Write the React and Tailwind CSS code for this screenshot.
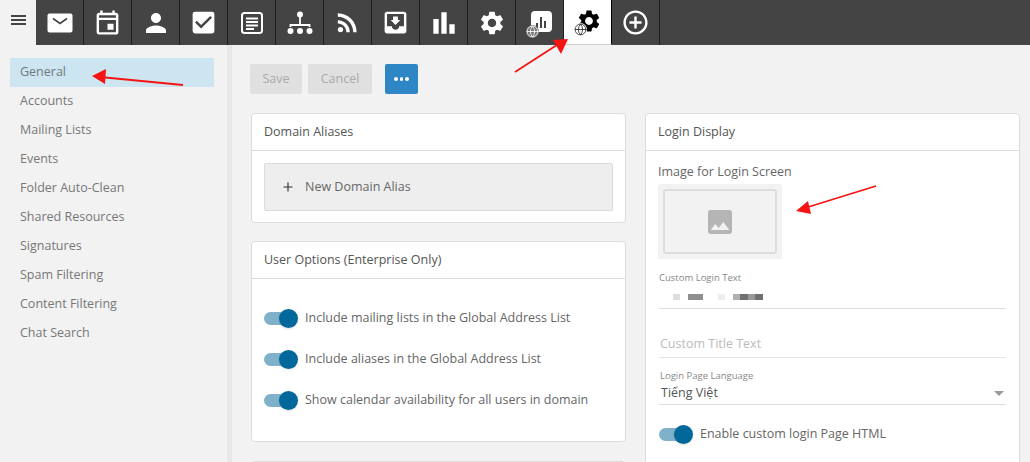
import React from "react";
import {
  MdPerson,
  MdCheckBox,
  MdRssFeed,
  MdMoveToInbox,
  MdBarChart,
  MdSettings,
  MdAddCircleOutline,
  MdOutlineEvent,
  MdImage,
} from "react-icons/md";
import { Globe, Plus } from "lucide-react";

const MailIcon = () => (
  <svg width="26" height="20" viewBox="0 0 26 20">
    <rect x="0.5" y="0.5" width="25" height="19" rx="2" fill="#fff" />
    <path d="M6 5.5 L13 10.5 L20 5.5" fill="none" stroke="#444" strokeWidth="1.6" />
  </svg>
);

const NotesIcon = () => (
  <svg width="24" height="24" viewBox="0 0 24 24">
    <rect x="2" y="2" width="20" height="20" rx="2.5" fill="none" stroke="#fff" strokeWidth="2" />
    <path d="M6 7.5h12M6 11h12M6 14.500h12M6 18h8" stroke="#fff" strokeWidth="2" />
  </svg>
);

const OrgIcon = () => (
  <svg width="26" height="24" viewBox="0 0 26 24">
    <circle cx="13" cy="3.500" r="3" fill="#fff" />
    <circle cx="3.500" cy="20" r="3" fill="#fff" />
    <circle cx="13" cy="20" r="3" fill="#fff" />
    <circle cx="22.500" cy="20" r="3" fill="#fff" />
    <path d="M13 6v9M3.500 16v-2h19v2" fill="none" stroke="#fff" strokeWidth="1.800" />
  </svg>
);

const ChartGlobeIcon = () => (
  <div className="relative w-6 h-6">
    <div className="absolute right-0 top-0 w-[21px] h-[21px] bg-white rounded-sm flex items-end justify-center gap-[2px] pb-1">
      <div className="w-[2px] h-[5px] bg-[#444]"></div>
      <div className="w-[2px] h-[11px] bg-[#444]"></div>
      <div className="w-[2px] h-[7px] bg-[#444]"></div>
    </div>
    <Globe className="absolute -left-[2px] bottom-[-3px] bg-[#777] rounded-full text-white" size={13} strokeWidth={1.500} />
  </div>
);

const AdminIcon = () => (
  <div className="relative w-7 h-7 flex items-center justify-center">
    <MdSettings className="absolute right-0 top-0 text-black" size={26} />
    <Globe className="absolute left-0 bottom-0 bg-white rounded-full text-[#222]" size={13} strokeWidth={1.500} />
  </div>
);

const tabs = [
  { icon: <MailIcon /> },
  { icon: <MdOutlineEvent size={29} /> },
  { icon: <MdPerson size={30} /> },
  { icon: <MdCheckBox size={29} /> },
  { icon: <NotesIcon /> },
  { icon: <OrgIcon /> },
  { icon: <MdRssFeed size={29} /> },
  { icon: <MdMoveToInbox size={29} /> },
  { icon: <MdBarChart size={32} /> },
  { icon: <MdSettings size={28} /> },
  { icon: <ChartGlobeIcon /> },
  { icon: <AdminIcon />, active: true },
  { icon: <MdAddCircleOutline size={29} /> },
];

const menu = [
  "General",
  "Accounts",
  "Mailing Lists",
  "Events",
  "Folder Auto-Clean",
  "Shared Resources",
  "Signatures",
  "Spam Filtering",
  "Content Filtering",
  "Chat Search",
];

const Toggle = () => (
  <div className="relative w-[34px] h-[19px] shrink-0">
    <div className="absolute left-0 top-[3px] w-[30px] h-[13px] rounded-full bg-[#7fb2ca]"></div>
    <div className="absolute right-0 top-0 w-[19px] h-[19px] rounded-full bg-[#02689b] shadow-sm"></div>
  </div>
);

const Card = ({ title, children, className }) => (
  <div className={`bg-white border border-[#dcdcdc] rounded-[4px] ${className}`}>
    <div className="h-[37px] px-3 flex items-center border-b border-[#dcdcdc] text-[12.500px] text-[#555]">
      {title}
    </div>
    {children}
  </div>
);

const ToggleRow = ({ label }) => (
  <div className="flex items-center gap-[7px] h-[19px]">
    <Toggle />
    <span className="text-[12.500px] text-[#666]">{label}</span>
  </div>
);

export default function App() {
  return (
    <div className="relative w-[1030px] h-[462px] overflow-hidden bg-[#f2f2f2] font-['Open_Sans',sans-serif]">
      {/* top bar */}
      <div className="flex h-[45px] bg-[#444]">
        <div className="w-[36px] bg-[#f2f2f2] flex items-center justify-center">
          <div className="flex flex-col gap-[2px] w-[15px] -mt-[5px]">
            <div className="h-[2px] bg-[#444]"></div>
            <div className="h-[2px] bg-[#444]"></div>
            <div className="h-[2px] bg-[#444]"></div>
          </div>
        </div>
        {tabs.map((t, i) => (
          <div
            key={i}
            className={
              t.active
                ? "w-[48px] h-[45px] flex items-center justify-center bg-white border-b border-[#ccc] border-r border-r-black"
                : "w-[48px] h-[45px] flex items-center justify-center text-white border-r border-[#1e1e1e]"
            }
          >
            {t.icon}
          </div>
        ))}
      </div>

      <div className="flex h-[417px]">
        {/* sidebar */}
        <div className="w-[227px] shrink-0 pt-[13px] pl-[10px] pr-[13px]">
          {menu.map((m, i) => (
            <div
              key={m}
              className={
                i === 0
                  ? "h-[29px] flex items-center pl-[10px] text-[12.500px] text-[#6f7a80] bg-[#cde4f1]"
                  : "h-[29px] flex items-center pl-[10px] text-[12.500px] text-[#777]"
              }
            >
              {m}
            </div>
          ))}
        </div>
        <div className="w-[5px] shrink-0 bg-[#e8e8e8]"></div>

        {/* main */}
        <div className="flex-1 min-w-0 pl-[18px] pr-[10px] pt-[19px]">
          <div className="flex h-[30px] text-[12.500px]">
            <div className="w-[52px] rounded-[2px] bg-[#e0e0e0] text-[#aaa] flex items-center justify-center">Save</div>
            <div className="w-[64px] ml-[6px] rounded-[2px] bg-[#e0e0e0] text-[#aaa] flex items-center justify-center">Cancel</div>
            <div className="w-[33px] ml-[13px] rounded-[2px] bg-[#2f86c4] flex items-center justify-center gap-[2px]">
              <div className="w-[3.500px] h-[3.500px] rounded-full bg-white"></div>
              <div className="w-[3.500px] h-[3.500px] rounded-full bg-white"></div>
              <div className="w-[3.500px] h-[3.500px] rounded-full bg-white"></div>
            </div>
          </div>

          <div className="grid grid-cols-[375px_375px] gap-x-[19px] mt-[19px] ml-px">
            <div>
              <Card title="Domain Aliases" className="h-[110px]">
                <div className="px-3 pt-3">
                  <div className="h-[48px] bg-[#eee] border border-[#dcdcdc] rounded-[2px] flex items-center pl-4 gap-[10px] text-[12.500px] text-[#666]">
                    <Plus size={14} className="text-[#333]" />
                    New Domain Alias
                  </div>
                </div>
              </Card>
              <Card title="User Options (Enterprise Only)" className="h-[201px] mt-[18px]">
                <div className="px-3 pt-[30px] flex flex-col gap-[22px]">
                  <ToggleRow label="Include mailing lists in the Global Address List" />
                  <ToggleRow label="Include aliases in the Global Address List" />
                  <ToggleRow label="Show calendar availability for all users in domain" />
                </div>
              </Card>
              <div className="h-[40px] mt-[19px] bg-white border border-[#dcdcdc] rounded-[4px]"></div>
            </div>

            <Card title="Login Display" className="h-[400px]">
              <div className="px-3 pt-3">
                <div className="text-[12.500px] text-[#666] leading-[17px]">Image for Login Screen</div>
                <div className="w-[124px] h-[75px] mt-[4px] bg-[#f2f2f2] p-[5px] flex">
                  <div className="flex-1 border-2 border-[#ddd] rounded-[3px] flex items-center justify-center">
                    <MdImage size={32} className="text-[#b5b5b5]" />
                  </div>
                </div>

                <div className="ml-px mr-px">
                  <div className="text-[9.500px] text-[#888] mt-[12px] leading-[14px]">Custom Login Text</div>
                  <div className="h-[24px] border-b border-[#ddd] flex items-center pl-[14px]">
                    <div className="w-[7px] h-[6px] bg-[#ddd]"></div>
                    <div className="w-[15px] h-[6px] ml-[8px] bg-[#8f8f8f]"></div>
                    <div className="w-[7px] h-[6px] ml-[15px] bg-[#eee]"></div>
                    <div className="w-[7px] h-[6px] ml-[8px] bg-[#b0b0b0]"></div>
                    <div className="w-[8px] h-[6px] bg-[#707070]"></div>
                    <div className="w-[7px] h-[6px] bg-[#999]"></div>
                    <div className="w-[8px] h-[6px] bg-[#707070]"></div>
                  </div>
                  <div className="h-[49px] border-b border-[#e5e5e5] flex items-end pb-[3px] pl-px text-[12.500px] text-[#bbb]">
                    Custom Title Text
                  </div>
                  <div className="text-[9.500px] text-[#888] mt-[11px] leading-[14px] pl-px">Login Page Language</div>
                  <div className="h-[22px] border-b border-[#ddd] flex items-center justify-between pl-[2px] pr-[2px] text-[12.500px] text-[#555]">
                    <span>Tiếng Việt</span>
                    <div className="w-0 h-0 border-x-[5px] border-x-transparent border-t-[5px] border-t-[#999]"></div>
                  </div>
                  <div className="mt-[20px]">
                    <ToggleRow label="Enable custom login Page HTML" />
                  </div>
                </div>
              </div>
            </Card>
          </div>
        </div>
      </div>

      {/* red annotation arrows on top of the screenshot */}
      <svg className="absolute left-0 top-0 pointer-events-none" width="1030" height="462">
        <g stroke="#f51414" strokeWidth="1.800" fill="#f51414">
          <line x1="183" y1="85" x2="100" y2="77" />
          <polygon points="92,76 106,69 105,84" stroke="none" />
          <line x1="515" y1="72" x2="560" y2="43" />
          <polygon points="568,39 553,40 561,54" stroke="none" />
          <line x1="876" y1="186" x2="805" y2="208" />
          <polygon points="796,211 808,201 811,214" stroke="none" />
        </g>
      </svg>
    </div>
  );
}
